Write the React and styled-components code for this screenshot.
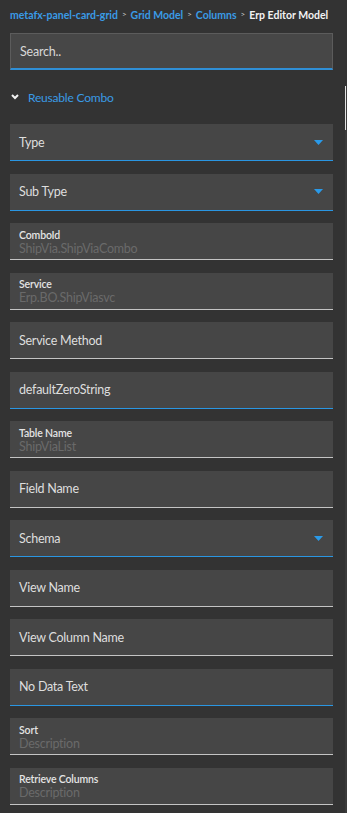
import React from 'react';
import styled, { createGlobalStyle } from 'styled-components';

const GlobalStyle = createGlobalStyle`
  html, body {
    margin: 0;
    padding: 0;
    background: #333333;
  }
  body {
    font-family: Lato, "Open Sans", "Liberation Sans", sans-serif;
    color: #dedede;
  }
`;

const Shell = styled.div`
  display: flex;
  width: 347px;
  min-height: 813px;
  background: #333333;
  overflow: hidden;
`;

const Panel = styled.div`
  flex: 1;
  min-width: 0;
  padding: 0 12px 0 10px;
`;

const ScrollTrack = styled.div`
  width: 2px;
  margin-top: 86px;
  background: #3b3b3b;
  display: flex;
  flex-direction: column;
`;

const ScrollThumb = styled.div`
  width: 1px;
  height: 44px;
  background: #e2e2e2;
`;

const Breadcrumb = styled.nav`
  display: flex;
  align-items: center;
  height: 30px;
  gap: 4px;
  font-size: 10.5px;
  font-weight: 700;
  white-space: nowrap;
`;

const Crumb = styled.span`
  color: ${props => (props.current ? '#f2f2f2' : '#3a9be6')};
`;

const Sep = styled.span`
  color: #cfcfcf;
  font-size: 8px;
  font-weight: 400;
  margin-top: -2px;
`;

const Search = styled.div`
  box-sizing: border-box;
  display: flex;
  align-items: center;
  margin-top: 3px;
  height: 37px;
  padding-left: 9px;
  background: #474747;
  border: 1px solid #5c5c5c;
  border-bottom: 2px solid #2f8fd6;
  color: #d8d8d8;
  font-size: 12.5px;
  letter-spacing: -0.2px;
`;

const SectionHeader = styled.div`
  display: flex;
  align-items: center;
  gap: 9px;
  height: 54px;
  padding-left: 1px;
  color: #3a9be6;
  font-size: 12px;
  letter-spacing: -0.2px;
`;

const FieldList = styled.div`
  display: flex;
  flex-direction: column;
  gap: 12.5px;
`;

const Field = styled.div`
  box-sizing: border-box;
  display: flex;
  align-items: center;
  justify-content: space-between;
  height: 37px;
  padding: 0 10px 0 9px;
  background: #464646;
  border-bottom: 1px solid ${props => (props.active ? '#2a96e2' : '#c4c4c4')};
`;

const FieldText = styled.span`
  color: #dedede;
  font-size: 12.5px;
  letter-spacing: -0.25px;
`;

const Stack = styled.div`
  display: flex;
  flex-direction: column;
  justify-content: center;
  padding-top: 2px;
`;

const SmallLabel = styled.span`
  color: #e4e4e4;
  font-size: 10.5px;
  line-height: 12px;
  font-weight: 600;
  letter-spacing: -0.15px;
`;

const Value = styled.span`
  color: #6a6a6a;
  font-size: 12.5px;
  line-height: 15px;
  letter-spacing: -0.25px;
`;

const Caret = () => (
  <svg width="9" height="5" viewBox="0 0 9 5">
    <path d="M0 0 H9 L4.5 5 Z" fill="#2a9ae9" />
  </svg>
);

const Chevron = () => (
  <svg width="8" height="6" viewBox="0 0 8 6">
    <path d="M1 1 L4 4 L7 1" stroke="#f2f2f2" strokeWidth="2" fill="none" />
  </svg>
);

const fields = [
  { text: 'Type', select: true, active: true },
  { text: 'Sub Type', select: true, active: true },
  { label: 'ComboId', value: 'ShipVia.ShipViaCombo' },
  { label: 'Service', value: 'Erp.BO.ShipViasvc' },
  { text: 'Service Method' },
  { text: 'defaultZeroString', active: true },
  { label: 'Table Name', value: 'ShipViaList' },
  { text: 'Field Name' },
  { text: 'Schema', select: true, active: true },
  { text: 'View Name' },
  { text: 'View Column Name' },
  { text: 'No Data Text', active: true },
  { label: 'Sort', value: 'Description' },
  { label: 'Retrieve Columns', value: 'Description' },
];

const App = () => {
  return (
    <>
      <GlobalStyle />
      <Shell>
        <Panel>
          <Breadcrumb>
            <Crumb>metafx-panel-card-grid</Crumb>
            <Sep>&gt;</Sep>
            <Crumb>Grid Model</Crumb>
            <Sep>&gt;</Sep>
            <Crumb>Columns</Crumb>
            <Sep>&gt;</Sep>
            <Crumb current>Erp Editor Model</Crumb>
          </Breadcrumb>

          <Search>Search..</Search>

          <SectionHeader>
            <Chevron />
            Reusable Combo
          </SectionHeader>

          <FieldList>
            {fields.map((f, i) => (
              <Field key={i} active={f.active}>
                {f.label ? (
                  <Stack>
                    <SmallLabel>{f.label}</SmallLabel>
                    <Value>{f.value}</Value>
                  </Stack>
                ) : (
                  <FieldText>{f.text}</FieldText>
                )}
                {f.select && <Caret />}
              </Field>
            ))}
          </FieldList>
        </Panel>
        <ScrollTrack>
          <ScrollThumb />
        </ScrollTrack>
      </Shell>
    </>
  );
};

export default App;
